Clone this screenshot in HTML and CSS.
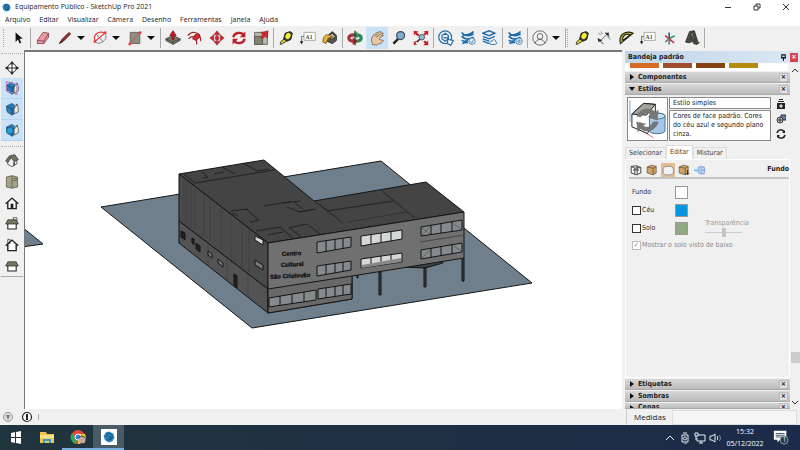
FILE: index.html
```html
<!DOCTYPE html>
<html lang="pt-BR">
<head>
<meta charset="utf-8">
<title>Equipamento Público - SketchUp Pro 2021</title>
<link rel="stylesheet" href="styles.css">
</head>
<body>
<svg class="defs" aria-hidden="true">
  <symbol id="tape" viewBox="0 0 20 20"><path d="M3 15l6-5 3 3-6 4-3 1z" fill="#d8c832" stroke="#222"/><path d="M9 4l6-2 3 2-2 8-5 2-4-3z" fill="#3a3a28" stroke="#111"/><ellipse cx="12.500" cy="7.500" rx="3" ry="4" fill="#f0ea30" transform="rotate(30 12.500 7.500)"/></symbol>
  <symbol id="waves" viewBox="0 0 20 20"><path d="M2 3c4 5 10 5 15 2M2 8c4 4 10 4 15 1M2 13c4 2 6 1 8 0M3 17c3-2 5-2 7-1M17 2c-3 4-8 4-14 5" fill="none" stroke="#1c6aa8" stroke-width="2"/></symbol>
  <symbol id="sketchup" viewBox="0 0 20 20"><path d="M10 1l7 3 2 7-3 6-7 2-6-4-2-7 4-6z" fill="#2b86bd"/><path d="M5 6c4-4 9-2 10 1s0 6-4 9M4 10c3-3 7-3 8 0s-1 4-3 5M6 14c1-2 3-2 3 0" fill="none" stroke="#0d456e" stroke-width="1.500"/></symbol>
  <symbol id="cube" viewBox="0 0 20 20"><path d="M2 5l7-3 8 2v11l-5 3-10-3z" fill="#cfa46a" stroke="#4d3b20"/><path d="M2 5l10 2v11M12 7l5-3" fill="none" stroke="#4d3b20"/></symbol>
  <symbol id="house" viewBox="0 0 20 20"><path d="M4 9v9h12V9" fill="#fff" stroke="#222" stroke-width="2"/><path d="M1 11l9-8 9 8" fill="none" stroke="#222" stroke-width="2"/></symbol>
  <symbol id="flat" viewBox="0 0 20 20"><path d="M4 9v8h12V9" fill="#fff" stroke="#222" stroke-width="1.500"/><path d="M4 4h12l3 6H1z" fill="#777862" stroke="#222"/></symbol>
  <symbol id="bluecube" viewBox="0 0 20 20"><path d="M2 6l8-4 5 4v9l-5 4-7-5z" fill="#287dbd" stroke="#164768"/><path d="M13 7l4-3 2 4v6l-6 3z" fill="#eee8d8" stroke="#444"/><path d="M15 4l3-2v4z" fill="#555"/><path d="M3 6l7 4 5-3M10 10v8" fill="none" stroke="#123d5c"/></symbol>
</svg>

<header class="titlebar">
  <svg class="app-logo"><use href="#sketchup"/></svg>
  <span class="app-title">Equipamento Público - SketchUp Pro 2021</span>
  <button aria-label="Minimizar"><svg viewBox="0 0 8 8"><path d="M1 4.500h6"/></svg></button>
  <button aria-label="Restaurar"><svg viewBox="0 0 8 8"><path d="M1 3h4v4H1zM3 3V1h4v4H5"/></svg></button>
  <button aria-label="Fechar"><svg viewBox="0 0 8 8"><path d="M1 1l6 6M7 1L1 7"/></svg></button>
</header>

<nav class="menubar" aria-label="Menu">
  <button>Arquivo</button><button>Editar</button><button>Visualizar</button><button>Câmera</button><button>Desenho</button><button>Ferramentas</button><button>Janela</button><button>Ajuda</button>
</nav>

<div class="toolbar" role="toolbar" aria-label="Ferramentas">
  <i class="grip"></i>
  <button aria-label="Selecionar"><svg viewBox="0 0 20 20"><path d="M7 3v12l3-3 2 5 2-1-2-5h4z" fill="#111"/></svg></button>
  <i class="sep"></i>
  <button aria-label="Borracha"><svg viewBox="0 0 20 20"><path d="M3 13l7-10 7 1v5l-6 8-8 0z" fill="#ee9aa6" stroke="#713b45"/><path d="M3 13l8 1 6-10M11 14v3" fill="none" stroke="#713b45"/></svg></button>
  <button aria-label="Linha"><svg viewBox="0 0 20 20"><path d="M3 17l3-5 9-9 2 2-9 9z" fill="#a42525" stroke="#4d1c1c"/><path d="M3 17l2-3 1 1z" fill="#111"/></svg></button>
  <button class="caret" aria-label="Opções de linha"></button>
  <button aria-label="Arco"><svg viewBox="0 0 20 20"><path d="M16 4c3 4 1 9-3 11-3 2-7 2-9-1M6 6l8 9" fill="none" stroke="#666"/><path d="M4 14C0 6 9 0 16 4L4 14" fill="none" stroke="#e33a40" stroke-width="1.500"/><path d="M2 13h3v3H2zM15 2h3v3h-3z" fill="#e33a40"/></svg></button>
  <button class="caret" aria-label="Opções de arco"></button>
  <button aria-label="Retângulo"><svg viewBox="0 0 20 20"><path d="M4 3h12v14H4z" fill="#8f8f80" stroke="#555"/><path d="M4 17L16 3" stroke="#e33a40"/><path d="M2 16h3v3H2zM15 2h3v3h-3z" fill="#e33a40"/></svg></button>
  <button class="caret" aria-label="Opções de forma"></button>
  <i class="sep"></i>
  <button aria-label="Empurrar/Puxar"><svg viewBox="0 0 20 20"><path d="M1 11l9-4 9 4v2l-9 5-9-5z" fill="#777761" stroke="#444"/><path d="M1 11l9 4 9-4M10 15v3" fill="none" stroke="#444"/><path d="M9 12V7H6l4-6 4 6h-3v5z" fill="#c61e28" stroke="#801018"/></svg></button>
  <button aria-label="Equidistância"><svg viewBox="0 0 20 20"><path d="M1 7c5-7 17-5 16 7M2 11c5-5 11-3 10 7" fill="none" stroke="#a52a30" stroke-width="1.500"/><path d="M7 11l3-5 5-1 1 4-5 4z" fill="#d72a32" stroke="#801018"/></svg></button>
  <button aria-label="Mover"><svg viewBox="0 0 20 20"><path d="M10 1l4 5H6zM10 19l4-5H6zM1 10l5-4v8zM19 10l-5-4v8zM8 8h1v-1h2v1h1v4h-1v1H9v-1H8z" fill="#c6252e" stroke="#84171d" stroke-width=".5"/></svg></button>
  <button aria-label="Rotacionar"><svg viewBox="0 0 20 20"><path d="M3 9c1-6 9-7 13-3M17 11c-1 6-9 7-13 3" fill="none" stroke="#bd202b" stroke-width="3"/><path d="M18 2v7h-7zM2 18v-7h7z" fill="#bd202b"/></svg></button>
  <button aria-label="Escala"><svg viewBox="0 0 20 20"><path d="M2 3h16v15H2z" fill="#b9b9a9" stroke="#555"/><path d="M2 8h10v10H2z" fill="#83836f" stroke="#555"/><path d="M9 9l3-3-2-3 9-2-1 9-3-2-3 3z" fill="#cd2932" stroke="#7e171c" stroke-width=".5"/></svg></button>
  <i class="sep"></i>
  <button aria-label="Trena"><svg><use href="#tape"/></svg></button>
  <button aria-label="Texto"><svg viewBox="0 0 20 20"><path d="M5 3h14v10H5z" fill="#fff" stroke="#999"/><path d="M5 8H2v8" fill="none" stroke="#555"/><path d="M0 14h4l-2 4z" fill="#111"/><text x="7" y="11" class="glyph">A1</text></svg></button>
  <button aria-label="Pintura"><svg viewBox="0 0 20 20"><path d="M7 7l6-5 5 5v6l-5 4-7-3z" fill="#57574a" stroke="#1c1c1c"/><path d="M8 7l5-3 4 4-5 4z" fill="#b5b59e" stroke="#222"/><path d="M9 6c-6-1-8 4-8 9l4 2 3-7 5-1z" fill="#e4b13a" stroke="#6d511a"/></svg></button>
  <i class="sep"></i>
  <button aria-label="Orbitar"><svg viewBox="0 0 20 20"><path d="M9 6c-9 0-9 8 0 8" fill="none" stroke="#a8323a" stroke-width="4"/><path d="M11 6c9 0 9 8 0 8" fill="none" stroke="#2c8655" stroke-width="4"/><path d="M7 9l6 5-6 5z" fill="#c62930"/><path d="M13 11L8 6l5-4z" fill="#2c9655"/><path d="M10 1v18" stroke="#222" stroke-width="1.500"/></svg></button>
  <button class="active" aria-label="Panorâmica"><svg viewBox="0 0 20 20"><path d="M4 18l-1-7 2-4 5-4 5-1 0 2 3 0-2 3 2 0-5 3 0 2 5 1-3 4-3 0-2 2z" fill="#e6c9a3" stroke="#796349"/><path d="M7 8l5-4M9 9l6-4" stroke="#796349"/></svg></button>
  <button aria-label="Zoom"><svg viewBox="0 0 20 20"><path d="M3 17l6-6" stroke="#222" stroke-width="3"/><circle cx="12" cy="7" r="5" fill="#80aed0" stroke="#3c4c58" stroke-width="1.500"/></svg></button>
  <button aria-label="Ver tudo"><svg viewBox="0 0 20 20"><path d="M5 15l4-4" stroke="#222" stroke-width="2"/><circle cx="11" cy="9" r="3.500" fill="#8fb8d4" stroke="#444"/><path d="M1 1l6 1-2 1 3 3-2 2-3-3-2 2zM19 1v6l-2-2-2 2-2-2 2-2-2-1zM19 19h-6l2-2-2-2 2-2 2 2 2-2zM1 19v-5l1 1 2-2 1 1-2 2 2 2z" fill="#c51f2b"/></svg></button>
  <i class="sep"></i>
  <button aria-label="3D Warehouse"><svg viewBox="0 0 20 20" fill="none" stroke="#236da8" stroke-width="1.500"><circle cx="9" cy="9" r="8"/><path d="M5 7l4-3 4 3v4l-4 3-4-3zM7 9l2 1 2-1"/><path d="M12 10v7l4 2 3-6-5-1z" fill="#fff"/></svg></button>
  <button aria-label="Extensões"><svg viewBox="0 0 20 20"><use href="#waves"/><circle cx="15" cy="14" r="4" fill="#eee" stroke="#2873ad"/><path d="M13 14l2 2 2-4" fill="none" stroke="#2873ad"/></svg></button>
  <button aria-label="Camadas"><svg viewBox="0 0 20 20" fill="none" stroke="#236da8" stroke-width="1.800"><path d="M1 4l8-3 7 3-7 3zM1 8l8 3 7-3M1 11l8 3M1 14l8 3"/><path d="M11 18c-3-2 0-5 2-4 1-4 5-1 4 1 3 1 1 3-1 3h-5z" fill="#fff" stroke-width="1.200"/></svg></button>
  <i class="sep"></i>
  <button aria-label="Gerenciar extensões"><svg viewBox="0 0 20 20"><use href="#waves"/><circle cx="15" cy="14" r="4" fill="#eee" stroke="#2873ad"/><circle cx="15" cy="14" r="1.500" fill="none" stroke="#2873ad"/></svg></button>
  <i class="sep"></i>
  <button aria-label="Conta"><svg viewBox="0 0 20 20" fill="none" stroke="#666" stroke-width="1.200"><circle cx="10" cy="10" r="9"/><circle cx="10" cy="8" r="3.500"/><path d="M4 17c1-7 11-7 12 0"/></svg></button>
  <button class="caret" aria-label="Opções da conta"></button>
  <i class="sep"></i><i class="grip"></i>
  <button aria-label="Trena 2"><svg><use href="#tape"/></svg></button>
  <button aria-label="Cotas"><svg viewBox="0 0 20 20"><path d="M6 13l8-8" fill="none" stroke="#555"/><path d="M2 10l6 3-5 2zM11 4l5-1 0 5z" fill="#222"/><path d="M3 11l5 6M12 3l5 6" stroke="#444"/><path d="M14 8l4 4M7 15l3 3" stroke="#2b8c45"/><path d="M3 4l3 2M6 2l2 3" stroke="#666"/></svg></button>
  <button aria-label="Transferidor"><svg viewBox="0 0 20 20"><path d="M3 17C0 6 9 0 19 4zM6 13l9-7C9 4 5 8 6 13z" fill="#b8aa39" fill-rule="evenodd" stroke="#252310" stroke-width="1.300"/></svg></button>
  <button aria-label="Texto 2"><svg viewBox="0 0 20 20"><path d="M5 3h14v10H5z" fill="#fff" stroke="#999"/><path d="M5 8H2v8" fill="none" stroke="#555"/><path d="M0 14h4l-2 4z" fill="#111"/><text x="7" y="11" class="glyph">A1</text></svg></button>
  <button aria-label="Eixos"><svg viewBox="0 0 20 20" fill="none" stroke-width="2"><path d="M9 11V3" stroke="#255da3"/><path d="M9 11l7-4" stroke="#299155"/><path d="M9 11l6 5M9 11L4 7" stroke="#ca303b"/><path d="M9 11l-5 4M9 11v7" stroke="#678"/></svg></button>
  <button aria-label="Texto 3D"><svg viewBox="0 0 20 20"><path d="M2 15L7 2l6-1 4 13 2 2-3 2-4-1-1-3-5 2z" fill="#4c4c45" stroke="#252522"/><path d="M8 3l3 0 3 12M9 8l1 4H8z" fill="#77776b" stroke="#333"/></svg></button>
  <i class="sep"></i>
</div>

<main class="workspace">
  <aside class="views" aria-label="Vistas">
    <i class="hgrip"></i>
    <button aria-label="Plano de seção"><svg viewBox="0 0 20 20"><circle cx="10" cy="10" r="6" fill="#fff" stroke="#333" stroke-width="1.500"/><path d="M1 10h18M10 4v12" stroke="#333" stroke-width="1.500"/><path d="M7 4l3-4 3 4zM7 16l3 4 3-4zM0 10l4-3v6zM20 10l-4-3v6z" fill="#222"/></svg></button>
    <button class="active" aria-label="Exibir planos de seção"><svg viewBox="0 0 20 20"><use href="#bluecube"/><path d="M2 1l15 4v14L2 14z" fill="none" stroke="#b77ab3" stroke-width="1.500"/></svg></button>
    <button class="active" aria-label="Exibir cortes"><svg><use href="#bluecube"/></svg></button>
    <button class="active" aria-label="Preencher cortes"><svg viewBox="0 0 20 20"><use href="#bluecube"/><circle cx="7" cy="11" r="5" fill="#229ddd" stroke="#154c70"/></svg></button>
    <i class="hgrip second"></i>
    <button aria-label="Iso"><svg viewBox="0 0 20 20"><path d="M4 8v7l6 3 7-4V7l-4-4z" fill="#eee" stroke="#333"/><path d="M1 10l5-7 8-2 5 7-6 3-4-6-5 7z" fill="#737461" stroke="#292923"/><path d="M12 12l2-1v5l-2 1z" fill="#222"/></svg></button>
    <button aria-label="Superior"><svg viewBox="0 0 20 20"><path d="M2 3l8-2 8 2v14l-8 2-8-2z" fill="#a4a489" stroke="#4b4b3f"/><path d="M10 1v17M13 5h3v3h-3z" stroke="#4b4b3f" fill="#d0d0b5"/></svg></button>
    <button aria-label="Frontal"><svg viewBox="0 0 20 20"><use href="#house"/><path d="M8 11h4v7H8z" fill="#222"/></svg></button>
    <button aria-label="Direita"><svg viewBox="0 0 20 20"><path d="M12 1h5v5h-5z" fill="#fff" stroke="#222"/><use href="#flat"/></svg></button>
    <button aria-label="Posterior"><svg viewBox="0 0 20 20"><path d="M4 2h3v6H4z" fill="#fff" stroke="#222"/><use href="#house"/></svg></button>
    <button aria-label="Esquerda"><svg><use href="#flat"/></svg></button>
    <i class="hline"></i>
  </aside>

  <section class="viewport" aria-label="Modelo">
    <svg class="scene" viewBox="25 52 597 357" preserveAspectRatio="xMinYMin slice" stroke="#151515" stroke-linejoin="round">
      <g fill="#6f7f8b">
        <path d="M22 227l21 17-21 3z"/>
        <path d="M101 207L381 161 532 283 252 328z"/>
      </g>
      <g fill="#3d4042">
        <path d="M379 272h2v23h-2zM424 266h2v21h-2zM462 258h2v23h-2zM357 274h1v4h-1z"/>
        <path d="M402 267l23 1 18-5-1-3-38 4z"/>
      </g>
      <path d="M179 174l85-14 50 41 112-19 38 30-196 31z" fill="#444"/>
      <path d="M179 174l89 69v46l-89-68z" fill="#4a4a4a"/>
      <path d="M179 221l89 68v24l-89-70z" fill="#535353"/>
      <path d="M268 243l196-31v46l-112 18v23l-84 14z" fill="#707070"/>
      <path d="M268 289l84-13v23l-84 14z" fill="#696969"/>
      <g fill="none" stroke="#222">
        <path d="M183 173l12 10 79-13M200 170l8 7-5 1M222 167l13 7M243 163l14 8 12-2M214 174l10-2"/>
        <path d="M231 211l17-2M246 209l13 11-9 2M264 206l24-4 3-1M283 203l17-2M287 207l13 5 10-2M295 203l8 6M298 212l18-3M232 213l6 3"/>
        <path d="M256 231l24-4 14 12M288 228l19-4 13 10M290 228l11 9M268 235l15-3"/>
        <path d="M320 205l23 18M327 211l66-10M382 191l33 27M314 201l14 10"/>
        <path d="M348 222l59-10" stroke="#333"/>
        <path d="M420 242l44-7" stroke="#444"/>
      </g>
      <g fill="none" stroke="#3a3a3a" stroke-width=".5">
        <path d="M184 178v43M187 180v44M191 183v44M195 186v44M204 193v44M210 198v43M221 206v44M231 214v44M242 223v44M249 228v44M208 245v20M227 260v20M248 275v21"/>
      </g>
      <g fill="#222">
        <path d="M181 231l4 2v7l-4-3zM192 238l2 1v6l-2-2zM196 243l4 3v6l-4-3zM234 274l3 2v12l-3-2z"/>
        <path d="M208 251l4 3v4l-4-3zM218 259l5 4v4l-5-4zM255 260l8 5v5l-8-5z" fill="#777"/>
        <path d="M255 236l8 4v5l-8-5z" fill="#ddd"/>
      </g>
      <g fill="#858a8c" stroke-width="1">
        <path d="M269 298l47-8v10l-47 7zM280 296v10M292 294v10M304 292v10"/>
        <path d="M318 289l33-5v10l-33 5zM326 288v10M335 286v10M343 285v10"/>
        <path d="M317 242l34-5v10l-34 6zM326 241v10M335 239v11M343 238v11"/>
        <path d="M317 266l34-5v9l-34 6zM326 265v9M335 263v10M343 262v10"/>
        <path d="M421 227l41-7v10l-41 6zM431 225v10M441 223v10M452 221v10"/>
        <path d="M421 250l41-7v9l-41 7zM431 248v10M441 246v10M452 244v10"/>
        <path d="M422 228l8 6M422 235l8-8M454 224l7 5M422 258l8-8M454 246l7 5" stroke="#444" stroke-width=".6"/>
      </g>
      <g fill="#d5d7d8">
        <path d="M361 236l41-6v9l-41 7zM371 235v9M381 233v9M391 231v10"/>
        <path d="M361 259l41-6v9l-41 6zM371 258v9M381 256v9M391 254v10"/>
        <path d="M362 268v-3l39-7v4z" fill="#888" stroke="none"/>
      </g>
      <g class="sign">
        <text x="282" y="256" transform="rotate(-3 282 256)">Centro</text>
        <text x="281" y="267" transform="rotate(-3 281 267)">Cultural</text>
        <text x="270" y="279" transform="rotate(-3 270 279)">São Cristovão</text>
      </g>
    </svg>
  </section>

  <aside class="tray">
    <h2 class="tray-title">Bandeja padrão
      <span class="tray-tools"><button aria-label="Fixar"><svg viewBox="0 0 8 8"><path d="M2 1h4v3H2zM1 4.500h6M4 5v3" fill="none" stroke="#112" stroke-width="1.200"/></svg></button><button class="close" aria-label="Fechar bandeja">×</button></span>
    </h2>
    <div class="tray-body">
      <div class="panels">
        <div class="swatches"><i class="s1"></i><i class="s2"></i><i class="s3"></i><i class="s4"></i></div>
        <h3><button class="fold" aria-label="Expandir Componentes"></button>Componentes<button class="x" aria-label="Fechar Componentes">×</button></h3>
        <h3><button class="fold down" aria-label="Recolher Estilos"></button>Estilos<button class="x" aria-label="Fechar Estilos">×</button></h3>
        <div class="style-info">
          <svg class="thumb" viewBox="0 0 40 42"><path d="M2 2v22" stroke="#6aa5d5"/><path d="M14 33l12 7" stroke="#d66"/><path d="M4 16l12-11 12 1 0 10-8 20-16-7z" fill="#fff" stroke="#222"/><path d="M4 16l12-11 12 1-9 11z" fill="#a3a3a0" stroke="#222"/><path d="M22 18c0-4 16-4 16 0v15c0 4-16 4-16 0z" fill="#a4c8e6" stroke="#4c6f8b"/><ellipse cx="30" cy="18" rx="8" ry="3" fill="#c1dcf1" stroke="#4c6f8b"/><path d="M9 18c4-9 15-9 19-4l3-2-1 10-9-3 3-2c-4-4-8-3-11 2zM31 24c-3 9-12 12-18 7l-3 3-1-10 9 2-3 2c5 3 8 1 11-4z" fill="#777" stroke="#666" stroke-width=".5"/></svg>
          <div class="fields">
            <input aria-label="Nome do estilo" value="Estilo simples">
            <textarea aria-label="Descrição do estilo">Cores de face padrão. Cores do céu azul e segundo plano cinza.</textarea>
          </div>
          <div class="side-tools">
            <button aria-label="Painel secundário"><svg viewBox="0 0 10 10"><path d="M1 4h8v6H1zM3 0h4v1H3zM2 2h6v1H2z" fill="#222"/><path d="M5 5v4M3 7h4" stroke="#fff"/></svg></button>
            <button aria-label="Criar estilo"><svg viewBox="0 0 10 10"><path d="M5 1h5v5H5z" fill="#6283a5" stroke="#334"/><circle cx="4" cy="6" r="3" fill="#ccc" stroke="#333"/><path d="M4 4v4M2 6h4" stroke="#333"/></svg></button>
            <button aria-label="Atualizar"><svg viewBox="0 0 10 10"><path d="M1 4c1-4 6-4 7-1M9 6c-1 4-6 4-7 1" fill="none" stroke="#222" stroke-width="1.500"/><path d="M9 1v3H6zM1 9V6h3z" fill="#222"/></svg></button>
          </div>
        </div>
        <div class="tabs" role="tablist"><button role="tab">Selecionar</button><button role="tab" class="current" aria-selected="true">Editar</button><button role="tab">Misturar</button></div>
        <div class="edit-panel">
          <div class="modes">
            <button aria-label="Arestas"><svg viewBox="0 0 20 20"><path d="M2 4l9-1 7 3v9l-7 3-9-3zM2 4l6 3v10M8 7l10-1M12 3v14M5 10h10" fill="#fff" stroke="#333" stroke-width="1.500"/></svg></button>
            <button aria-label="Faces"><svg><use href="#cube"/></svg></button>
            <button class="chosen" aria-label="Fundo"><svg viewBox="0 0 20 20"><path d="M2 7l4-3h10l3 4v7l-4 3H5l-3-3z" fill="#edf4fb" stroke="#65717e"/></svg></button>
            <button aria-label="Marca-d'água"><svg viewBox="0 0 20 20"><use href="#cube"/><path d="M16 10v7M13 15l3 3 3-3" stroke="#222" stroke-width="1.500" fill="none"/></svg></button>
            <button aria-label="Modelagem"><svg viewBox="0 0 20 20"><path d="M0 9h7v3H0z" fill="#7db6ee"/><path d="M7 5l6-1v13l-6-2z" fill="#a8cdf0" stroke="#5b9cda"/><path d="M13 5h4v11h-4M13 10h6" fill="none" stroke="#5b8fda" stroke-width="1.500"/></svg></button>
            <strong>Fundo</strong>
          </div>
          <div class="options">
            <span>Fundo</span><button class="color white" aria-label="Cor do fundo"></button><span></span>
            <label><input type="checkbox">Céu</label><button class="color sky" aria-label="Cor do céu"></button><span></span>
            <label><input type="checkbox">Solo</label><button class="color soil" aria-label="Cor do solo"></button>
            <label class="alpha">Transparência<input type="range" disabled></label>
            <label class="below"><input type="checkbox" checked disabled>Mostrar o solo visto de baixo</label>
          </div>
        </div>
        <h3><button class="fold" aria-label="Expandir Etiquetas"></button>Etiquetas<button class="x" aria-label="Fechar Etiquetas">×</button></h3>
        <h3><button class="fold" aria-label="Expandir Sombras"></button>Sombras<button class="x" aria-label="Fechar Sombras">×</button></h3>
        <h3 class="cut"><button class="fold" aria-label="Expandir Cenas"></button>Cenas<button class="x" aria-label="Fechar Cenas">×</button></h3>
      </div>
      <div class="scrollbar"><svg viewBox="0 0 8 8"><path d="M1 6l3-3 3 3"/></svg><i></i><svg viewBox="0 0 8 8"><path d="M1 2l3 3 3-3"/></svg></div>
    </div>
  </aside>
</main>

<footer class="status">
  <svg viewBox="0 0 12 12"><circle cx="6" cy="6" r="4.500" fill="#ddd" stroke="#999"/><path d="M4 4h4L6 9z" fill="#777"/></svg>
  <svg viewBox="0 0 12 12"><circle cx="6" cy="6" r="4.500" fill="#fff" stroke="#222" stroke-width="1.200"/><path d="M5 3h2v6H5z" fill="#222"/></svg>
  <i class="tick"></i>
  <label class="measure"><span>Medidas</span><input></label>
</footer>

<div class="taskbar">
  <button aria-label="Iniciar"><svg viewBox="0 0 16 16"><path d="M3 4l4-1v5H3zM8 3l5-1v6H8zM3 9h4v5l-4-1zM8 9h5v6l-5-1z" fill="#fff"/></svg></button>
  <button aria-label="Explorador de Arquivos"><svg viewBox="0 0 16 16"><path d="M1 3h6l1 2h7v9H1z" fill="#efc84f"/><path d="M1 6h14v3H1z" fill="#fae08a"/><path d="M4 14v-4h8v4h-2v-2H6v2z" fill="#3999db"/></svg></button>
  <button class="open" aria-label="Chrome"><svg viewBox="0 0 16 16"><circle cx="8" cy="8" r="7" fill="#e8443a"/><path d="M2 4l5 7-1 4a7 7 0 0 1-4-11z" fill="#32a65a"/><path d="M8 5h7a7 7 0 0 1-7 10z" fill="#f4c534"/><circle cx="8" cy="8" r="3" fill="#3d7fda" stroke="#fff"/><circle cx="12" cy="11" r="3.500" fill="#c6aa99"/><path d="M9 9c1-3 5-2 6 0M10 15h5" stroke="#333" fill="none"/></svg></button>
  <button class="open here" aria-label="SketchUp"><svg viewBox="0 0 16 16"><path d="M0 0h16v16H0z" fill="#fff"/><use href="#sketchup" x="2" y="2" width="12" height="12"/></svg></button>
  <div class="systray">
    <svg viewBox="0 0 12 12"><path d="M2 8l4-4 4 4"/></svg>
    <svg viewBox="0 0 12 12"><path d="M3 3h6v7H3zM4 1h4M5 12h3"/><circle cx="6" cy="6.500" r="1.500"/></svg>
    <svg viewBox="0 0 12 12"><path d="M4 3h7v6H3V6M5 11h4M7 9v2M1 1h3v3H1zM2 4v4"/></svg>
    <svg viewBox="0 0 12 12"><path d="M1 4h2l3-2v8L3 8H1zM8 4c1 1 1 3 0 4"/><path d="M10 3c2 2 2 4 0 6" stroke="#8791a0"/></svg>
  </div>
  <time>15:32<br>05/12/2022</time>
  <button class="notice" aria-label="Notificações"><svg viewBox="0 0 18 18"><path d="M1 2h14v10H8l-3 3v-3H1z" fill="#fff"/><path d="M3 5h10M3 7h10M3 9h6" stroke="#345"/><circle cx="12.500" cy="12.500" r="4.500" fill="#26384b" stroke="#9aa"/><text x="11" y="15" class="badge">1</text></svg></button>
</div>
</body>
</html>
```
FILE: styles.css
```css
* { box-sizing: border-box; }
body {
  margin: 0;
  height: 100vh;
  display: flex;
  flex-direction: column;
  overflow: hidden;
  background: #fff;
  color: #222;
  font: 7px/10px "Open Sans", "Noto Sans", sans-serif;
}
button { border: 0; padding: 0; background: none; color: inherit; font: inherit; display: flex; align-items: center; justify-content: center; }
input, textarea { font: inherit; color: inherit; }
svg { display: block; flex: none; }
h2, h3 { margin: 0; font: inherit; }
.defs { position: absolute; width: 0; height: 0; }
.glyph { font: bold 7px "Liberation Serif", serif; fill: #444; }

.titlebar { display: flex; align-items: center; height: 14px; flex: none; padding-left: 2px; }
.app-logo { width: 9px; height: 9px; }
.app-title { flex: 1; padding-left: 4px; }
.titlebar button { width: 29px; height: 14px; }
.titlebar button svg { width: 8px; height: 8px; fill: none; stroke: #333; }

.menubar { display: flex; height: 12px; flex: none; padding-left: 5px; gap: 9px; }

.toolbar { display: flex; align-items: center; height: 24px; flex: none; padding-left: 3px; background: #f0f0f0; }
.toolbar button { width: 22px; height: 22px; }
.toolbar svg { width: 16px; height: 16px; }
.toolbar .caret { width: 13px; padding-right: 3px; }
.caret::after { content: ""; border: 4px solid transparent; border-top-color: #111; border-bottom: 0; }
.active { background: #c9e2f8; }
.sep { width: 1px; height: 20px; margin: 0 1px; background: #aaa; }
.grip { width: 2px; height: 18px; margin-right: 2px; border-left: 1px dotted #aaa; }

.workspace { display: flex; flex: 1; min-height: 0; }
.views { width: 24px; flex: none; background: #f0f0f0; padding: 3px 1px 0; }
.views button { width: 22px; height: 21px; }
.views svg { width: 14px; height: 14px; }
.views .active { border-bottom: 1px solid #b1d4f0; }
.hgrip { display: block; height: 4px; border-top: 1px dotted #aaa; }
.hgrip.second { margin-top: 5px; }
.hline { display: block; border-top: 1px solid #aaa; }
.viewport { flex: 1; min-width: 0; background: #fff; border: solid #777; border-width: 2px 0 0 1px; overflow: hidden; }
.scene { width: 100%; height: 100%; }
.sign { font: bold 6px "Liberation Sans", sans-serif; fill: #111; stroke-width: .3; }

.tray { width: 178px; flex: none; display: flex; flex-direction: column; padding: 1px 0 0 3px; background: #f0f0f0; font: 7px/9px "DejaVu Sans Condensed", "DejaVu Sans", sans-serif; }
.tray-title { display: flex; height: 12px; align-items: center; justify-content: space-between; padding: 0 2px 0 3px; background: linear-gradient(90deg, #bfd4e8, #dce8f4); font-weight: bold; }
.tray-tools { display: flex; gap: 3px; }
.tray-tools svg { width: 7px; height: 7px; }
.close { width: 8px; height: 9px; background: #d6454c; color: #fff; }
.tray-body { display: flex; flex: 1; min-height: 0; }
.panels { flex: 1; min-width: 0; display: flex; flex-direction: column; gap: 1px; overflow: hidden; }
.swatches { display: flex; gap: 4px; height: 8px; padding: 0 30px 3px 5px; margin-right: 2px; background: #fff; }
.swatches i { flex: 1; }
.s1 { background: #d66b27; }
.s2 { background: #a14d2d; }
.s3 { background: #864312; }
.s4 { background: #b58b0b; }
.panels h3 { display: flex; align-items: center; flex: none; height: 11px; padding-right: 2px; background: linear-gradient(#d8d8d8, #bcbcbc); border-bottom: 1px solid #aaa; font-weight: bold; }
.fold { width: 13px; height: 9px; }
.fold::after { content: ""; border: 3px solid transparent; border-left: 4px solid #111; border-right: 0; }
.fold.down::after { border: 3px solid transparent; border-top: 4px solid #111; border-bottom: 0; }
.x { width: 9px; height: 9px; margin-left: auto; border: 1px solid #bbb; background: #e0e0e0; }
.panels h3.cut { height: 6px; align-items: flex-start; overflow: hidden; line-height: 9px; }
.style-info { display: flex; gap: 1px; flex: none; height: 46px; padding: 1px 1px 1px 2px; }
.thumb { width: 41px; height: 44px; background: #fff; border: 1px solid #888; }
.fields { flex: 1; min-width: 0; display: flex; flex-direction: column; gap: 1px; }
.fields input, .fields textarea { width: 100%; margin: 0; padding: 0 3px; border: 1px solid #888; border-radius: 0; background: #fff; }
.fields input { height: 12px; }
.fields textarea { flex: 1; padding: 1px 0 0 3px; resize: none; overflow: hidden; line-height: 9px; }
.side-tools { display: flex; flex-direction: column; justify-content: space-around; width: 17px; align-items: center; }
.side-tools svg { width: 10px; height: 10px; }
.tabs { display: flex; align-items: flex-end; flex: none; height: 16px; color: #444; }
.tabs button { height: 12px; padding: 0 3px; border: 1px solid #ddd; border-bottom: 0; }
.tabs .current { height: 14px; background: #fff; }
.edit-panel { flex: 1; min-height: 0; margin-top: -1px; border: 1px solid #fff; padding: 2px 0 0 3px; }
.modes { display: flex; align-items: center; height: 17px; gap: 2px; border-bottom: 2px solid #c5c5c5; }
.modes button { width: 14px; height: 14px; }
.modes svg { width: 12px; height: 12px; }
.chosen { background: #e3bc91; }
.modes strong { margin-left: auto; }
.options { display: grid; grid-template-columns: 43px 14px 1fr; grid-auto-rows: 14px; row-gap: 4px; align-items: center; padding: 6px 0 0 3px; color: #333; }
.options label { display: flex; align-items: center; gap: 1px; }
.options input[type="checkbox"] { appearance: none; width: 9px; height: 9px; margin: 0; border: 1px solid #333; background: #fff; }
.color { width: 13px; height: 13px; border: 1px solid #999; }
.white { background: #fff; }
.sky { background: #0797df; }
.soil { background: #91aa83; }
.options .alpha { flex-direction: column; align-items: flex-start; gap: 0; padding-left: 16px; color: #999; }
.alpha input { appearance: none; width: 37px; height: 9px; margin: 0; background: linear-gradient(#ccc, #ccc) center / 100% 1px no-repeat; }
.alpha input::-webkit-slider-thumb { appearance: none; width: 4px; height: 9px; background: #c4c4c4; }
.options .below { grid-column: 1 / -1; color: #888; margin-top: -2px; }
.options .below input { border-color: #bbb; }
.below input::after { content: "✓"; display: block; line-height: 7px; text-align: center; }
.scrollbar { width: 10px; flex: none; display: flex; flex-direction: column; align-items: center; padding: 3px 0 2px; }
.scrollbar svg { width: 8px; height: 8px; fill: none; stroke: #333; }
.scrollbar i { width: 9px; height: 11px; margin: auto 0 36px; background: #cdcdcd; }

.status { display: flex; align-items: center; gap: 7px; height: 16px; flex: none; padding-left: 2px; background: #f0f0f0; }
.status svg { width: 12px; height: 12px; }
.tick { width: 1px; height: 6px; margin-left: -2px; background: #aaa; }
.measure { display: flex; align-items: center; width: 174px; height: 16px; margin-left: auto; padding: 0 3px 0 2px; border-left: 1px solid #ccc; font-size: 8px; }
.measure span { width: 43px; padding-left: 5px; }
.measure input { flex: 1; min-width: 0; height: 15px; border: 1px solid #ddd; background: #f5f5f5; }

.taskbar { display: flex; align-items: center; height: 25px; flex: none; background: linear-gradient(90deg, #20353d, #1c2b49); color: #fff; }
.taskbar button { width: 31px; height: 25px; border-bottom: 2px solid transparent; }
.taskbar svg { width: 16px; height: 16px; }
.taskbar .open { border-bottom-color: #76aee0; }
.taskbar .here { background: #4a5b68; }
.taskbar .systray { display: flex; gap: 3px; margin-left: auto; }
.taskbar .systray svg { width: 12px; height: 12px; fill: none; stroke: #e8edf2; }
.taskbar time { width: 48px; text-align: center; line-height: 12px; }
.taskbar .notice { width: 31px; padding-right: 8px; }
.badge { font: 7px "Open Sans", sans-serif; fill: #fff; }
```
